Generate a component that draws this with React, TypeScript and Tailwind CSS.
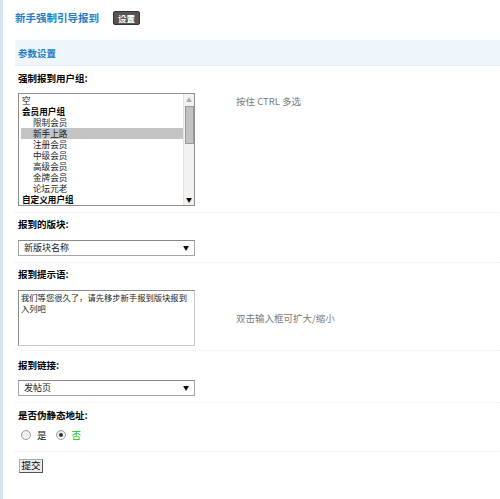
import React from "react";

const font = { fontFamily: '"Noto Sans CJK SC", "Noto Sans", sans-serif' };

type Group = { name: string; bold?: boolean; indent?: boolean; selected?: boolean };

const groups: Group[] = [
  { name: "空" },
  { name: "会员用户组", bold: true },
  { name: "限制会员", indent: true },
  { name: "新手上路", indent: true, selected: true },
  { name: "注册会员", indent: true },
  { name: "中级会员", indent: true },
  { name: "高级会员", indent: true },
  { name: "金牌会员", indent: true },
  { name: "论坛元老", indent: true },
  { name: "自定义用户组", bold: true },
];

function Label({ children }: { children: React.ReactNode }) {
  return (
    <div className="h-[12px] pl-[3px] text-[9.5px] leading-[12px] font-bold text-black">{children}</div>
  );
}

function Hint({ children }: { children: React.ReactNode }) {
  return <div className="text-[9.5px] leading-[12px] text-[#7a7a7a] whitespace-nowrap">{children}</div>;
}

function Dropdown({ value }: { value: string }) {
  return (
    <div className="ml-[3px] flex h-[16px] w-[177px] items-center justify-between border border-[#a5a5a5] border-t-[#8a8a8a] bg-white pl-[5px] pr-[5px]">
      <span className="text-[9px] leading-[12px] text-[#222]">{value}</span>
      <span className="text-[6px] leading-none text-black">▼</span>
    </div>
  );
}

function Radio({ checked }: { checked?: boolean }) {
  return (
    <span className="flex h-[10px] w-[10px] items-center justify-center rounded-full border border-[#9c9c9c] bg-gradient-to-b from-[#e8e8e8] to-[#fafafa]">
      {checked && <span className="h-[4px] w-[4px] rounded-full bg-[#333]" />}
    </span>
  );
}

export default function App() {
  return (
    <div className="flex h-[499px] w-[500px] bg-white" style={font}>
      <div className="w-[3px] shrink-0 bg-[#d3e4f3]" />
      <div className="flex flex-1 flex-col pl-[12px]">
        {/* page title */}
        <div className="flex h-[40px] items-start gap-[14px] pt-[11px]">
          <span className="text-[10.5px] leading-[14px] font-bold text-[#1f7ec4]">新手强制引导报到</span>
          <span className="flex h-[14px] w-[27px] items-center justify-center rounded-[2px] border border-[#333] bg-[#555] text-[8.5px] font-bold leading-none text-white">
            设置
          </span>
        </div>

        {/* section band */}
        <div className="flex h-[26px] items-center border-b border-[#e3edf6] bg-[#eef5fb] pl-[3px]">
          <span className="text-[9.5px] font-bold leading-[12px] text-[#1f7ec4]">参数设置</span>
        </div>

        {/* user groups */}
        <div className="border-b border-dotted border-[#e4ecf4] pt-[6px] pb-[6px]">
          <Label>强制报到用户组:</Label>
          <div className="mt-[9px] flex items-start">
            <div className="ml-[3px] flex h-[113px] w-[177px] border border-[#8f8f8f] bg-white">
              <div className="flex flex-1 flex-col pt-[1px] pl-[2px]">
                {groups.map((g) => (
                  <div
                    key={g.name}
                    className={`flex h-[11px] items-center overflow-hidden ${g.indent ? "pl-[12px]" : "pl-[1px]"} ${
                      g.selected ? "bg-[#c4c4c4]" : ""
                    }`}
                  >
                    <span
                      className={`text-[8.6px] leading-[11px] ${g.bold ? "font-bold text-black" : "text-[#222]"}`}
                    >
                      {g.name}
                    </span>
                  </div>
                ))}
              </div>
              <div className="flex w-[11px] flex-col items-center border-l border-[#e2e2e2] bg-[#f2f2f2]">
                <span className="mt-[2px] text-[6px] leading-[7px] text-[#aaa]">▲</span>
                <div className="mt-[3px] h-[38px] w-[9px] border border-[#9a9a9a] bg-[#c2c2c2]" />
                <div className="flex-1" />
                <span className="mb-[2px] text-[6px] leading-[7px] text-black">▼</span>
              </div>
            </div>
            <div className="ml-[41px] pt-[2px]">
              <Hint>按住 CTRL 多选</Hint>
            </div>
          </div>
        </div>

        {/* forum */}
        <div className="border-b border-dotted border-[#e4ecf4] pt-[5px] pb-[6px]">
          <Label>报到的版块:</Label>
          <div className="mt-[10px]">
            <Dropdown value="新版块名称" />
          </div>
        </div>

        {/* welcome text */}
        <div className="border-b border-dotted border-[#e4ecf4] pt-[5px] pb-[4px]">
          <Label>报到提示语:</Label>
          <div className="mt-[10px] flex items-center">
            <div className="ml-[3px] h-[56px] w-[177px] border border-[#8a8a8a] border-r-[#c8c8c8] border-b-[#c8c8c8] bg-white pl-[2px] pr-[1px] pt-[1px] text-[8.3px] leading-[11px] text-[#222]">
              我们等您很久了，请先移步新手报到版块报到入列吧
            </div>
            <div className="ml-[41px]">
              <Hint>双击输入框可扩大/缩小</Hint>
            </div>
          </div>
        </div>

        {/* link */}
        <div className="border-b border-dotted border-[#e4ecf4] pt-[8px] pb-[6px]">
          <Label>报到链接:</Label>
          <div className="mt-[9px]">
            <Dropdown value="发帖页" />
          </div>
        </div>

        {/* rewrite */}
        <div className="border-b border-dotted border-[#e4ecf4] pt-[6px] pb-[11px]">
          <Label>是否伪静态地址:</Label>
          <div className="mt-[9px] flex h-[10px] items-center pl-[6px] text-[9.5px] leading-[12px]">
            <Radio />
            <span className="ml-[6px] text-[#222]">是</span>
            <span className="ml-[9px]">
              <Radio checked />
            </span>
            <span className="ml-[6px] text-[#00c400]">否</span>
          </div>
        </div>

        <div className="pt-[7px] pl-[4px]">
          <button className="flex h-[14px] w-[24px] items-center justify-center border border-[#555] border-t-[#aaa] border-l-[#aaa] bg-[#ececec] text-[9.5px] leading-none text-black">
            提交
          </button>
        </div>
      </div>
    </div>
  );
}
